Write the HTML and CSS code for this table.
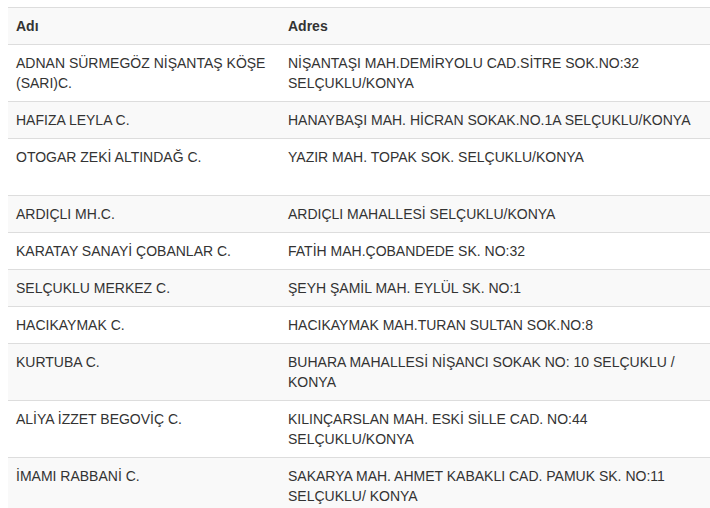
FILE: index.html
```html
<!DOCTYPE html>
<html lang="tr">
<head>
<meta charset="utf-8">
<title>Adresler</title>
<link rel="stylesheet" href="styles.css">
</head>
<body>
<table class="table">
  <thead>
    <tr><th class="col-name">Adı</th><th>Adres</th></tr>
  </thead>
  <tbody>
    <tr><td>ADNAN SÜRMEGÖZ NİŞANTAŞ KÖŞE (SARI)C.</td><td>NİŞANTAŞI MAH.DEMİRYOLU CAD.SİTRE SOK.NO:32 SELÇUKLU/KONYA</td></tr>
    <tr><td>HAFIZA LEYLA C.</td><td>HANAYBAŞI MAH. HİCRAN SOKAK.NO.1A SELÇUKLU/KONYA</td></tr>
    <tr><td>OTOGAR ZEKİ ALTINDAĞ C.</td><td>YAZIR MAH. TOPAK SOK. SELÇUKLU/KONYA<br>&nbsp;</td></tr>
    <tr><td>ARDIÇLI MH.C.</td><td>ARDIÇLI MAHALLESİ SELÇUKLU/KONYA</td></tr>
    <tr><td>KARATAY SANAYİ ÇOBANLAR C.</td><td>FATİH MAH.ÇOBANDEDE SK. NO:32</td></tr>
    <tr><td>SELÇUKLU MERKEZ C.</td><td>ŞEYH ŞAMİL MAH. EYLÜL SK. NO:1</td></tr>
    <tr><td>HACIKAYMAK C.</td><td>HACIKAYMAK MAH.TURAN SULTAN SOK.NO:8</td></tr>
    <tr><td>KURTUBA C.</td><td>BUHARA MAHALLESİ NİŞANCI SOKAK NO: 10 SELÇUKLU / KONYA</td></tr>
    <tr><td>ALİYA İZZET BEGOVİÇ C.</td><td>KILINÇARSLAN MAH. ESKİ SİLLE CAD. NO:44 SELÇUKLU/KONYA</td></tr>
    <tr><td>İMAMI RABBANİ C.</td><td>SAKARYA MAH. AHMET KABAKLI CAD. PAMUK SK. NO:11 SELÇUKLU/ KONYA</td></tr>
  </tbody>
</table>
</body>
</html>
```
FILE: styles.css
```css
html, body {
  background: #fff;
}
body {
  margin: 7px 0 0 8px;
  font-family: "Liberation Sans", Arial, Helvetica, sans-serif;
  font-size: 14px;
  line-height: 20px;
  color: #333;
}
.table {
  width: 100%;
  border-collapse: collapse;
  border-spacing: 0;
  table-layout: fixed;
}
.table th,
.table td {
  padding: 8px;
  text-align: left;
  vertical-align: top;
  border-top: 1px solid #ddd;
}
.table th {
  font-weight: bold;
  border-bottom: 1px solid #ddd;
}
.col-name {
  width: 256px;
}
.table thead tr {
  background: #f9f9f9;
}
.table tbody tr:nth-child(even) {
  background: #f9f9f9;
}
```
